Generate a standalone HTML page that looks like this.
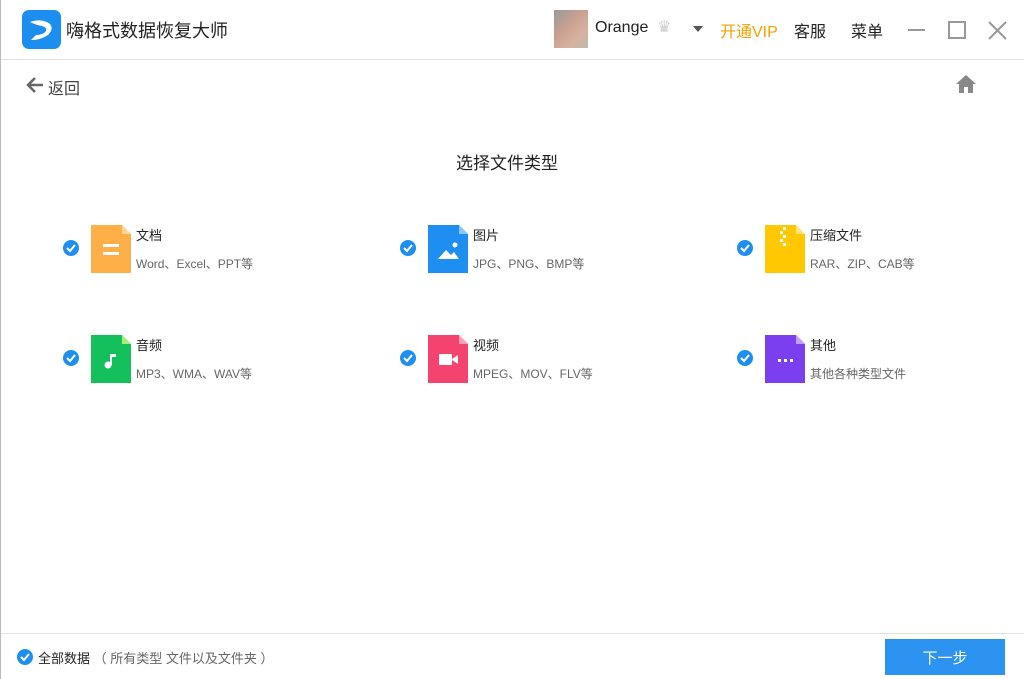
<!DOCTYPE html><html><head><meta charset="utf-8"><style>
*{margin:0;padding:0;box-sizing:border-box}
body{width:1024px;height:679px;background:#fff;font-family:"Liberation Sans","Noto Sans CJK SC",sans-serif;position:relative;overflow:hidden;border-left:1px solid #bbb}
.a{position:absolute;white-space:nowrap}
.t{font-size:13px;color:#222}
.s{font-size:12px;color:#666}
</style></head><body>
<svg class="a" style="left:21px;top:10px" width="39" height="39" viewBox="0 0 39 39"><rect width="39" height="39" rx="7" fill="#1c8ef0"/><path d="M8 12 Q20 8 28 14 Q32 19 26 25 Q19 30 9 30 L14 25 Q21 25 24 21 Q25 17 20 16 Q14 15 8 12Z" fill="#fff"/></svg>
<div class="a" style="left:65px;top:17px;font-size:18px;color:#222">嗨格式数据恢复大师</div>
<div class="a" style="left:553px;top:10px;width:34px;height:38px;background:linear-gradient(135deg,#999,#c9a090 40%,#d8b0a0 70%,#bba)"></div>
<div class="a" style="left:594px;top:19px;font-size:16px;color:#222">Orange</div>
<div class="a" style="left:656px;top:17px;font-size:16px;color:#ccc">♛</div>
<div class="a" style="left:692px;top:26px;width:0;height:0;border-left:5px solid transparent;border-right:5px solid transparent;border-top:6px solid #555"></div>
<div class="a" style="left:719px;top:18px;font-size:16px;color:#f5a000">开通VIP</div>
<div class="a" style="left:793px;top:18px;font-size:16px;color:#222">客服</div>
<div class="a" style="left:850px;top:18px;font-size:16px;color:#222">菜单</div>
<div class="a" style="left:907px;top:29px;width:17px;height:2px;background:#999"></div>
<div class="a" style="left:947px;top:21px;width:18px;height:18px;border:2px solid #999"></div>
<svg class="a" style="left:987px;top:21px" width="19" height="19"><path d="M1 1L18 18M18 1L1 18" stroke="#999" stroke-width="2"/></svg>
<div class="a" style="left:0;top:59px;width:1024px;height:1px;background:#e2e2e2"></div>
<svg class="a" style="left:25px;top:77px" width="18" height="16"><path d="M9 1L2 8L9 15M2 8H17" stroke="#666" stroke-width="2.5" fill="none"/></svg>
<div class="a" style="left:47px;top:75px;font-size:16px;color:#444">返回</div>
<svg class="a" style="left:954px;top:74px" width="22" height="20"><path d="M11 1L1 10H4V19H9V13H13V19H18V10H21Z" fill="#888"/></svg>
<div class="a" style="left:455px;top:149px;font-size:17px;color:#222">选择文件类型</div>
<svg class="a" style="left:0;top:0" width="1024" height="679">
<g fill="#1e8ff0"><circle cx="70" cy="248" r="8"/><circle cx="407" cy="248" r="8"/><circle cx="744" cy="248" r="8"/><circle cx="70" cy="358" r="8"/><circle cx="407" cy="358" r="8"/><circle cx="744" cy="358" r="8"/><circle cx="24" cy="657" r="8"/></g>
<g stroke="#fff" stroke-width="2" fill="none"><path d="M66 248l3 3l5-6"/><path d="M403 248l3 3l5-6"/><path d="M740 248l3 3l5-6"/><path d="M66 358l3 3l5-6"/><path d="M403 358l3 3l5-6"/><path d="M740 358l3 3l5-6"/><path d="M20 657l3 3l5-6"/></g>
<g transform="translate(90,225)"><path d="M0 0H31L40 9V48H0Z" fill="#ffaf47"/><path d="M31 0L40 9H31Z" fill="#ffd699"/><rect x="12" y="19" width="16" height="3" fill="#fff"/><rect x="12" y="27" width="16" height="3" fill="#fff"/></g>
<g transform="translate(427,225)"><path d="M0 0H31L40 9V48H0Z" fill="#1e8ff0"/><path d="M31 0L40 9H31Z" fill="#8cc6f7"/><path d="M10 34L18 25L23 30L26 27L31 34Z" fill="#fff"/><circle cx="27" cy="20" r="2.5" fill="#fff"/></g>
<g transform="translate(764,225)"><path d="M0 0H31L40 9V48H0Z" fill="#ffc800"/><path d="M31 0L40 9H31Z" fill="#ffe480"/><g fill="#fff"><rect x="18" y="2" width="3" height="3"/><rect x="15" y="6" width="3" height="3"/><rect x="18" y="10" width="3" height="3"/><rect x="15" y="14" width="3" height="3"/><rect x="18" y="18" width="3" height="3"/></g></g>
<g transform="translate(90,335)"><path d="M0 0H31L40 9V48H0Z" fill="#14c05c"/><path d="M31 0L40 9H31Z" fill="#a8ee7a"/><circle cx="17" cy="30" r="3.5" fill="#fff"/><path d="M19 30V19H25V22H21V30" fill="#fff"/></g>
<g transform="translate(427,335)"><path d="M0 0H31L40 9V48H0Z" fill="#f54370"/><path d="M31 0L40 9H31Z" fill="#fba0b6"/><rect x="11" y="19" width="13" height="11" rx="1" fill="#fff"/><path d="M24 24L30 20V29L24 25Z" fill="#fff"/></g>
<g transform="translate(764,335)"><path d="M0 0H31L40 9V48H0Z" fill="#7b3ff0"/><path d="M31 0L40 9H31Z" fill="#c0a0fa"/><g fill="#fff"><rect x="13" y="24" width="3" height="3"/><rect x="19" y="24" width="3" height="3"/><rect x="25" y="24" width="3" height="3"/></g></g>
</svg>
<div class="a t" style="left:135px;top:225px">文档</div><div class="a s" style="left:135px;top:255px">Word、Excel、PPT等</div>
<div class="a t" style="left:472px;top:225px">图片</div><div class="a s" style="left:472px;top:255px">JPG、PNG、BMP等</div>
<div class="a t" style="left:809px;top:225px">压缩文件</div><div class="a s" style="left:809px;top:255px">RAR、ZIP、CAB等</div>
<div class="a t" style="left:135px;top:335px">音频</div><div class="a s" style="left:135px;top:365px">MP3、WMA、WAV等</div>
<div class="a t" style="left:472px;top:335px">视频</div><div class="a s" style="left:472px;top:365px">MPEG、MOV、FLV等</div>
<div class="a t" style="left:809px;top:335px">其他</div><div class="a s" style="left:809px;top:365px">其他各种类型文件</div>
<div class="a" style="left:0;top:633px;width:1024px;height:1px;background:#e2e2e2"></div>
<div class="a" style="left:37px;top:648px;font-size:13px;color:#222">全部数据 <span style="color:#666">（ 所有类型 文件以及文件夹 ）</span></div>
<div class="a" style="left:884px;top:639px;width:120px;height:36px;background:#2d93f0;color:#fff;font-size:15px;text-align:center;line-height:40px">下一步</div>
</body></html>
